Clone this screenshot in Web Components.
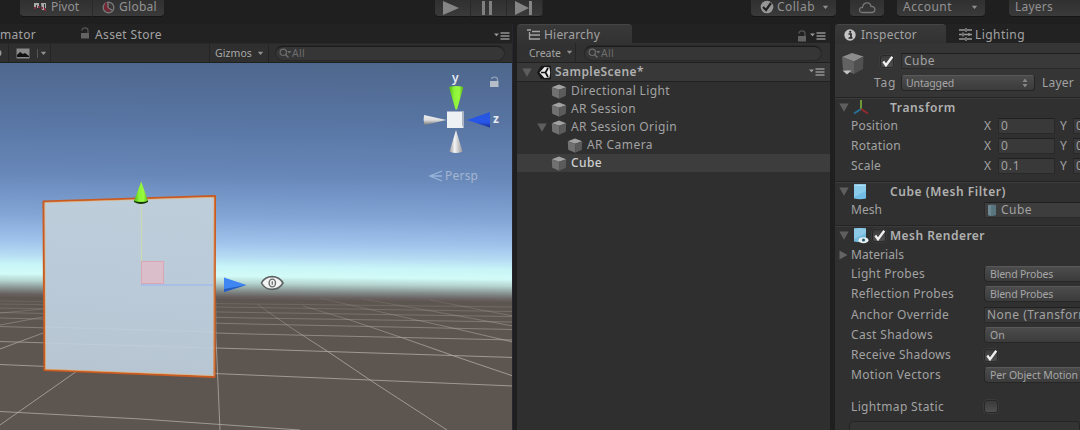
<!DOCTYPE html>
<html lang="en">
<head>
<meta charset="utf-8">
<title>Scene editor</title>
<style>
html,body{margin:0;height:100%;overflow:hidden;background:#1f1f1f}
body{font:12px/14px "Noto Sans","Open Sans",sans-serif;color:#a2a2a2}
</style>
</head>
<body>
<editor-app></editor-app>
<script>
function define(name, css, html, ready) {
  customElements.define(name, class extends HTMLElement {
    connectedCallback() {
      if (this.shadowRoot) return;
      const root = this.attachShadow({ mode: 'open' });
      root.innerHTML = '<style>*{box-sizing:border-box}' + css + '</style>' + (typeof html === 'function' ? html(this) : html);
      if (ready) ready(this);
    }
  });
}

// A label whose tracking is adjusted so that its text spans the width in "w".
define('ui-text', `:host{display:block;flex:none;white-space:nowrap;line-height:14px}
  :host([strong]){font-weight:600}:host([small]){font-size:10.5px}
  span{display:inline-block}`, '<span><slot></slot></span>', el => {
  const w = +el.getAttribute('w');
  if (!w) return;
  const natural = el.shadowRoot.querySelector('span').getBoundingClientRect().width;
  el.style.letterSpacing = ((w - natural) / el.textContent.length).toFixed(3) + 'px';
  el.style.width = w + 'px';
});

const ICONS = {
  pivot: [14, 10, '<path d="M1 1h5v5H4V3H3v3H1zM8 1h5v5h-1V2h-1v6H9z" fill="#aaa"/><path d="M1 5h2v2H1zM5 4h2v2H5zM8 5h2v2H8zM11 6h2v3h-2z" fill="#853044"/>'],
  globe: [13, 13, '<circle cx="6.5" cy="6.5" r="5.3" fill="#3a3434" stroke="#777" stroke-width="1.4"/><path d="M6 2v5l4 2M3 9l3-2" stroke="#999" fill="none"/><path d="M3 2l2-1v5l4 4-3 1-4-3z" fill="#7a2434"/>'],
  play: [18, 16, '<path d="M1 1l16 7-16 7z" fill="#858585"/>'],
  pause: [12, 16, '<path d="M1 1h3v14H1zM8 1h3v14H8z" fill="#808080"/>'],
  step: [18, 16, '<path d="M0 1l14 7-14 7zM14 1h3v14h-3z" fill="#858585"/>'],
  check: [14, 14, '<circle cx="7" cy="7" r="6.3" fill="#969696"/><path d="M3 7l3 3 5-7" fill="none" stroke="#222" stroke-width="2.2"/>'],
  cloud: [18, 13, '<path d="M4.5 11.5C0 11.5 1 6 4.500 6.500C5 1 12 0 13 5.500C18 5 18 11.500 14 11.500Z" fill="none" stroke="#777" stroke-width="1.3"/>'],
  lock: [10, 12, '<path d="M1 6h8v5.500H1z" fill="#636363"/><path d="M2 3.500C2 0 8 0 8 3.500V6" fill="none" stroke="#555" stroke-width="1.3"/>'],
  image: [15, 11, '<path d="M.5.5h13v10H.5z" fill="#898989"/><path d="M1 7l3-3 3 2 2-1 4 3v1H1z" fill="#111"/>'],
  down: [7, 5, '<path d="M.8.8h5.400L3.500 4z" fill="#909090"/>'],
  menu: [16, 8, '<path d="M0 1.500h5L2.500 4.200z" fill="#999"/><path d="M6.500 1h9M6.500 4h9M6.500 7h9" stroke="#929292" stroke-width="1.4"/>'],
  search: [13, 11, '<circle cx="4.300" cy="4.300" r="3.200" fill="none" stroke="#6c6c6c" stroke-width="1.200"/><path d="M6.500 6.500l3 3" stroke="#6c6c6c" stroke-width="1.500"/><path d="M8 3h4.500l-2.200 2.500z" fill="#6c6c6c"/>'],
  list: [14, 12, '<path d="M0 1h4M5 2.500h8M5 6h8M5 10h8M2.500 3v7H5M2.500 6H5" fill="none" stroke="#a4a4a4" stroke-width="1.300"/>'],
  info: [12, 12, '<circle cx="6" cy="6" r="5.700" fill="#c4c4c4"/><path d="M4.500 5H7v4M4.500 9h4" fill="none" stroke="#292929" stroke-width="1.700"/><circle cx="6.200" cy="2.800" r="1.100" fill="#292929"/>'],
  sliders: [13, 13, '<path d="M0 2h6M8 2h5M0 6.500h3M5 6.500h8M0 11h6M8 11h5M7 0v4M4 4.500v4M10 5v3M7 9v4" stroke="#999" stroke-width="1.300" fill="none"/>'],
  fold: [10, 9, '<path d="M.3.5h9.400L5 8.700z" fill="#5e5e5e"/>'],
  foldright: [9, 10, '<path d="M.5.500v9L8.500 5z" fill="#646464"/>'],
  unity: [15, 15, '<path d="M0 7.500L4 1 12 .5 14 1V14L12 14.500 4 14Z" fill="#161616"/><path d="M7.500 2L12.500 2.500l.7 5-.7 5-5 .5L2.500 7.500Z" fill="#e8e8e8"/><path d="M8.500 7.500H4M8.500 7.500L11 3M8.500 7.500L11 12" stroke="#111" stroke-width="1.700"/>'],
  cube: [16, 15, '<path d="M.8 3.200L8 .6l7.200 2.600-7 2.600z" fill="#a2a2a2"/><path d="M.8 3.200l7.400 2.600V14.800L1.200 11.800z" fill="#717171"/><path d="M15.200 3.200L8.200 5.800v9l6.600-3z" fill="#5b5b5b"/>'],
  bigcube: [24, 24, '<path d="M1 5L11 1l11.500 3.500L13 9.500z" fill="#8c8c8c"/><path d="M1 5l12 4.500V22L2 17.500z" fill="#626262"/><path d="M22.500 4.500L13 9.500V22l9-5z" fill="#505050"/><path d="M1.500 18.500h9L6 22.500z" fill="#c2c2c2"/>'],
  axes: [16, 15, '<path d="M8 9V0" stroke="#6f9838" stroke-width="2"/><path d="M8 9l-7 4.500" stroke="#27719a" stroke-width="2"/><path d="M8 9l7 4.500" stroke="#96292c" stroke-width="2"/>'],
  mesh: [14, 17, '<path d="M1 1.500Q7 .5 13 1.500V15.500Q7 17 1 15.500Z" fill="#72bde3"/><path d="M1 1.500Q7 .5 13 1.500V8L1 14Z" fill="#8acbea"/><path d="M1 2Q7 3 13 2" stroke="#b8e2f5" fill="none"/>'],
  meshgrey: [10, 13, '<path d="M1 1Q5 0 9 1v10Q5 13 1 11z" fill="#587580"/><path d="M1 1h3v11l-3-1z" fill="#6d8890"/>'],
  renderer: [16, 17, '<path d="M1 1.500Q7 .5 13 1.500V14.500Q7 16 1 14.500Z" fill="#72b9dd"/><path d="M1 1.500Q7 .5 13 1.500V6L1 12Z" fill="#8dcae8"/><ellipse cx="10.500" cy="13.200" rx="5" ry="3" fill="#e8f0f2"/><circle cx="10.500" cy="13" r="1.600" fill="#28596e"/>'],
  updown: [6, 10, '<path d="M.5 4L3 .5 5.500 4zM.5 6L3 9.500 5.500 6z" fill="#888"/>']
};
define('ui-icon', ':host{display:block;flex:none}svg{display:block}', el => {
  const [w, h, body] = ICONS[el.getAttribute('name')];
  return `<svg width="${w}" height="${h}" viewBox="0 0 ${w} ${h}">${body}</svg>`;
});

define('tool-button', `:host{display:flex;flex:none;align-items:center;height:17px;padding-bottom:2px;box-sizing:border-box;
  background:linear-gradient(#303030,#3a3a3a);border-bottom:1px solid #151515;border-radius:0 0 4px 4px}`, '<slot></slot>');

define('panel-tab', `:host{display:flex;flex:none;align-items:center;height:20px;padding-top:1px;box-sizing:border-box}
  :host([active]){background:linear-gradient(#393939,#323232);border-radius:4px 4px 0 0;border-top:1px solid #454545;padding-top:0}`, '<slot></slot>');

define('search-field', `:host{display:flex;align-items:center;height:14px;border-radius:8px;background:#363636;border-top:1px solid #1c1c1c;
  box-shadow:0 0 0 1px #282828;color:#6c6c6c;padding-left:3px}`,
  '<ui-icon name="search"></ui-icon><ui-text small w="13" style="padding-bottom:1px">All</ui-text>');

define('check-box', `:host{display:block;flex:none;width:14px;height:13px;background:linear-gradient(#3a3a3a,#505050);border-radius:3px;border:1px solid #292929;box-sizing:border-box;box-shadow:0 0 0 .5px #454545}
  svg{display:block;overflow:visible}`, el => `<svg width="12" height="11" viewBox="0 0 12 11">${el.hasAttribute('checked') ? '<path d="M2.300 5.500L5 9.300 11.300.8" fill="none" stroke="#f2f2f2" stroke-width="2.300"/>' : ''}</svg>`);

define('drop-down', `:host{display:flex;flex:none;align-items:center;height:16px;border-radius:4px;box-sizing:border-box;
  background:linear-gradient(#4c4c4c,#3b3b3b);border:1px solid #262626;border-top-color:#595959;padding-left:5px;color:#a6a6a6}`, '<slot></slot>');

define('value-field', `:host{display:flex;flex:none;align-items:center;height:16px;box-sizing:border-box;background:#393939;border:1px solid #292929;border-top-color:#202020;padding-left:2px;overflow:hidden}`, '<slot></slot>');

define('prop-row', `:host{display:flex;align-items:center;height:20.25px;padding-left:16px}
  .name{width:133px;flex:none}`, el => `<div class="name"><ui-text w="${el.getAttribute('w')}">${el.getAttribute('label')}</ui-text></div><slot></slot>`);

define('vector-row', ':host{display:block}value-field{width:57px;margin:0 5px 0 2px}', el => `
  <prop-row label="${el.getAttribute('label')}" w="${el.getAttribute('w')}" style="height:20px">
    <ui-text style="width:12px">X</ui-text><value-field><ui-text style="letter-spacing:.8px">${el.getAttribute('x')}</ui-text></value-field>
    <ui-text style="width:12px">Y</ui-text><value-field style="margin-left:1px"><ui-text>0</ui-text></value-field>
  </prop-row>`);

define('tree-row', `:host{display:flex;align-items:center;height:18px}
  :host([selected]){background:#3d3d3d;color:#d0d0d0;font-weight:500}
  .fold{width:14px;flex:none}ui-text{margin-left:4px}`, el => `
  <div class="fold" style="margin-left:${el.getAttribute('indent')}px">${el.hasAttribute('open') ? '<ui-icon name="fold"></ui-icon>' : ''}</div>
  <ui-icon name="cube"></ui-icon><ui-text w="${el.getAttribute('w')}">${el.getAttribute('label')}</ui-text>`);

define('component-head', `:host{display:flex;align-items:center;height:20px;box-sizing:border-box;border-top:1px solid #242424;box-shadow:inset 0 1px #3b3b3b;padding-left:4px;color:#b0b0b0}
  .icons{display:flex;align-items:center;width:42px;margin-left:-1px;flex:none}.icons ui-icon{margin-left:5px}check-box{margin-left:3px}`, el => `
  <ui-icon name="fold"></ui-icon><div class="icons"><ui-icon name="${el.getAttribute('icon')}"></ui-icon>${el.hasAttribute('toggle') ? '<check-box checked></check-box>' : ''}</div>
  <ui-text strong w="${el.getAttribute('w')}">${el.getAttribute('label')}</ui-text>`);

define('app-toolbar', `:host{display:flex;height:24px;background:#1f1f1f;align-items:flex-start;color:#929292}
  .left{border-right:1px solid #2a2a2a;border-bottom-right-radius:0}.mid{width:36px;padding:0 0 1px 8px;border-radius:0;border-right:1px solid #292929}`, `
  <tool-button class="left" style="width:73px;margin-left:20px;padding-left:13px"><ui-icon name="pivot"></ui-icon><ui-text w="28" style="margin-left:4px">Pivot</ui-text></tool-button>
  <tool-button style="width:71px;padding-left:9px;border-bottom-left-radius:0"><ui-icon name="globe"></ui-icon><ui-text w="38" style="margin-left:4px">Global</ui-text></tool-button>
  <tool-button class="mid" style="margin-left:271px;padding-left:7px;border-bottom-left-radius:4px"><ui-icon name="play"></ui-icon></tool-button>
  <tool-button class="mid" style="padding-left:10px"><ui-icon name="pause"></ui-icon></tool-button>
  <tool-button class="mid" style="border-bottom-right-radius:4px"><ui-icon name="step"></ui-icon></tool-button>
  <tool-button style="width:85px;margin-left:208px;padding-left:9px"><ui-icon name="check"></ui-icon><ui-text w="38" style="margin-left:3px">Collab</ui-text><ui-icon name="down" style="margin-left:7px"></ui-icon></tool-button>
  <tool-button style="width:34px;margin-left:14px;padding-left:8px"><ui-icon name="cloud"></ui-icon></tool-button>
  <tool-button style="width:88px;margin-left:13px;padding-left:6px"><ui-text w="49">Account</ui-text><ui-icon name="down" style="margin-left:19px"></ui-icon></tool-button>
  <tool-button style="width:90px;margin-left:24px;padding-left:6px"><ui-text w="38">Layers</ui-text></tool-button>`);

define('scene-view', ':host{display:block;flex:1;overflow:hidden}svg{display:block}', `
<svg width="512" height="367" viewBox="0 63 512 367">
  <defs>
    <linearGradient id="sky" gradientUnits="userSpaceOnUse" x1="256" y1="63" x2="253.300" y2="300">
      <stop offset="0" stop-color="#4e678d"/><stop offset=".25" stop-color="#5875a3"/><stop offset=".48" stop-color="#6888ba"/><stop offset=".65" stop-color="#82a5d6"/><stop offset=".76" stop-color="#a0c3ec"/><stop offset=".82" stop-color="#b6dcf3"/><stop offset=".86" stop-color="#c8f5f8"/><stop offset=".9" stop-color="#d2fbf7"/><stop offset=".93" stop-color="#b4d3cf"/><stop offset=".962" stop-color="#858f8d"/><stop offset=".987" stop-color="#67605f"/><stop offset="1" stop-color="#5f5753"/>
    </linearGradient>
    <linearGradient id="face" x1=".5" y1="0" x2=".4" y2="1"><stop offset="0" stop-color="#becdda"/><stop offset=".5" stop-color="#bbcad8"/><stop offset="1" stop-color="#b6c5d1"/></linearGradient>
    <linearGradient id="fade" x1="0" y1="296" x2="0" y2="350" gradientUnits="userSpaceOnUse"><stop offset="0" stop-color="#aaa39f" stop-opacity=".1"/><stop offset="1" stop-color="#aaa49f" stop-opacity=".85"/></linearGradient>
    <linearGradient id="cone"><stop offset="0" stop-color="#999"/><stop offset=".4" stop-color="#f4f4f4"/><stop offset="1" stop-color="#999"/></linearGradient>
    <linearGradient id="coneh" x2="0" y2="1"><stop offset="0" stop-color="#eee"/><stop offset=".5" stop-color="#ddd"/><stop offset="1" stop-color="#777"/></linearGradient>
    <linearGradient id="green"><stop offset="0" stop-color="#4db511"/><stop offset=".35" stop-color="#8cf23a"/><stop offset=".7" stop-color="#98fa3e"/><stop offset="1" stop-color="#55a819"/></linearGradient>
    <linearGradient id="blue" x2="0" y2="1"><stop offset="0" stop-color="#2458d8"/><stop offset=".65" stop-color="#2856ea"/><stop offset="1" stop-color="#142f8d"/></linearGradient>
  </defs>
  <rect y="63" width="512" height="242" fill="url(#sky)"/>
  <path d="M0 297L512 302V430H0Z" fill="#5c5550"/>
  <g fill="none" stroke="url(#fade)" stroke-width="1">
    <path d="M0 411.500L141 419 300 430M0 364.500L250 375 513 386M0 341.500L250 349 513 357.500M0 326.500L250 334 513 340M0 318L250 324 513 329.500M0 312.500L250 318 513 322M0 308L250 312.500 513 316.500M0 304L250 307.500 513 311.500M0 301L513 307"/>
    <path d="M257 304L290 327 330 353 373 382 447 430M303 306L350 320 403 338 457 357 513 376M320 298L350 305 403 317 457 329 513 342M363 299L437 312 513 326M430 300L513 316M216 300L216 337 220 430M0 425L77 371M0 349L43 333M0 325L43 317M0 313L43 309"/>
  </g>
  <path d="M43.500 201.500L215 196 214.500 377 44.500 370Z" fill="url(#face)" stroke="#c85a22" stroke-width="2.100" stroke-linejoin="round"/>
  <path d="M45 202.500L214 197.300V375.500L45.500 369.200Z" fill="none" stroke="#e8b777" stroke-width=".6"/>
  <path d="M45 343L214 348M45 327L214 332" stroke="#ccd8de" stroke-opacity=".35"/>
  <path d="M141.500 204V284" stroke="#c8dab8" stroke-width="1.300"/><path d="M141 285H213" stroke="#a5bbe8" stroke-width="1.300"/>
  <rect x="141.500" y="261.500" width="22" height="22" fill="#dabfcb" stroke="#dca5b4"/>
  <path d="M134 202Q141 206 148 202V200H134Z" fill="#153606"/><path d="M141.200 181.500L148 201Q141 203 134 201Z" fill="url(#green)"/>
  <path d="M224 277.500L246.500 285 224 292Z" fill="#3f86f2"/><path d="M224 289L246.500 285 224 292Z" fill="#285cbc"/>
  <path d="M261.500 283C266 274.500 278 274.500 283 283C278 291.500 266 291.500 261.500 283Z" fill="#f2f3f2" stroke="#5d6363" stroke-width="1.600"/><ellipse cx="272.300" cy="283" rx="3.200" ry="3.900" fill="#eee" stroke="#666b6b" stroke-width="1.400"/><path d="M272.300 281.300v3.400" stroke="#777" stroke-width="1.400"/>
  <path d="M449 87Q456 85 463.500 87L457 109.500H455.500Z" fill="url(#green)"/><path d="M424 115Q423 120 424.500 125L446.500 120Z" fill="url(#coneh)"/>
  <path d="M467 120L490 112V127.500Z" fill="url(#blue)"/><path d="M456 130L462.500 151.500Q456 154.500 449.500 151.500Z" fill="url(#cone)"/>
  <path d="M447 111.500H463.500V128H447Z" fill="#eef1f4"/><path d="M462 111.500H464V127.500L462 126Z" fill="#a9b5c4"/>
  <path d="M490 81h8.500v6H490z" fill="#b5bdc8"/><path d="M491.500 79C491.500 76.500 497.500 76.500 497.500 79.500V81" fill="none" stroke="#8fa0b8" stroke-width="1.200"/>
  <path d="M442 171L430 176 442 181M430 176H442" stroke="#98b4d8" fill="none" stroke-width="1.300"/>
  <g font-family="Noto Sans,sans-serif"><text x="452" y="82" font-size="12" font-weight="600" fill="#e6ebf2" textLength="7">y</text><text x="493" y="123" font-size="12" font-weight="700" fill="#e6ebf2">z</text><text x="445" y="180" font-size="12" fill="#a3b5cf" textLength="33">Persp</text></g>
</svg>`);

define('scene-panel', `:host{display:flex;flex-direction:column;width:513px;flex:none;border-right:1px solid #24282e;box-sizing:border-box}
  .tabs{display:flex;height:19px;align-items:center;background:#222}.bar{display:flex;height:20px;align-items:center;background:#2f2f2f;border-top:1px solid #282828;border-bottom:1px solid #202020;color:#a8a8a8}
  .sep{height:18px;border-left:1px solid #242424}`, `
  <div class="tabs"><ui-text w="36" style="margin-top:2px">mator</ui-text><ui-icon name="lock" style="margin:-2px 0 0 44px"></ui-icon><ui-text w="67" style="margin:2px 0 0 5px">Asset Store</ui-text><ui-icon name="menu" style="margin:5px 0 0 332px"></ui-icon></div>
  <div class="bar"><svg width="2" height="8"><circle cx="-2" cy="4" r="3.500" fill="#999"/></svg><i class="sep" style="margin-left:6px"></i><ui-icon name="image" style="margin-left:7px"></ui-icon><i class="sep" style="height:9px;border-color:#555;margin-left:6px"></i><ui-icon name="down" style="margin-left:2px"></ui-icon><i class="sep" style="margin-left:3px"></i><i class="sep" style="margin-left:158px"></i><ui-text small w="37" style="margin-left:5px">Gizmos</ui-text><ui-icon name="down" style="margin-left:5px"></ui-icon><i class="sep" style="margin-left:4px"></i><search-field style="width:228px;margin-left:7px"></search-field></div>
  <scene-view></scene-view>`);

define('hierarchy-panel', `:host{display:block;width:313px;flex:none;margin-left:4px;background:#2f2f2f}
  .tabs{display:flex;height:19px;background:#222}.bar{display:flex;height:20px;align-items:center;background:#313131;border-bottom:1px solid #202020;color:#a4a4a4}
  .scene{display:flex;height:19px;align-items:center;background:#383838;border-bottom:1px solid #202020;padding-left:5px;color:#b0b0b0}`, `
  <div class="tabs"><panel-tab active style="width:115px;padding-left:10px"><ui-icon name="list"></ui-icon><ui-text w="56" style="margin-left:3px">Hierarchy</ui-text></panel-tab><ui-icon name="lock" style="margin:6px 0 0 165px"></ui-icon><ui-icon name="menu" style="margin:8px 0 0 3px"></ui-icon></div>
  <div class="bar"><ui-text small w="32" style="margin-left:12px">Create</ui-text><ui-icon name="down" style="margin-left:5px"></ui-icon><i style="height:19px;border-left:1px solid #262626;margin:0 9px 0 2px"></i><search-field style="width:236px"></search-field></div>
  <div class="scene"><ui-icon name="fold"></ui-icon><ui-icon name="unity" style="margin-left:5px"></ui-icon><ui-text strong w="89" style="margin-left:3px">SampleScene*</ui-text><ui-icon name="menu" style="margin-left:165px"></ui-icon></div>
  <tree-row indent="20" label="Directional Light" w="99"></tree-row>
  <tree-row indent="20" label="AR Session" w="65"></tree-row>
  <tree-row indent="20" label="AR Session Origin" w="106" open></tree-row>
  <tree-row indent="36" label="AR Camera" w="66"></tree-row>
  <tree-row indent="20" label="Cube" w="31" selected></tree-row>`);

define('inspector-panel', `:host{display:block;flex:1;min-width:0;overflow:hidden;margin-left:5px;background:#303030}
  .tabs{display:flex;height:19px;background:#222}.head{display:flex;height:54px;background:#353535;padding:10px 0 0 6px}
  .rows{flex:1;margin-left:11px}.line{display:flex;align-items:center;height:16px}.line+.line{margin-top:6px}drop-down.wide{width:120px}
  .box{height:20px;margin:4px 0 0 14px;border:1px solid #242424;border-radius:4px;background:#343434}`, `
  <div class="tabs"><panel-tab active style="width:111px;padding-left:9px"><ui-icon name="info"></ui-icon><ui-text w="56" style="margin-left:5px">Inspector</ui-text></panel-tab><panel-tab style="padding-left:13px"><ui-icon name="sliders"></ui-icon><ui-text w="50" style="margin-left:3px">Lighting</ui-text></panel-tab></div>
  <div class="head"><ui-icon name="bigcube" style="margin-top:-1px"></ui-icon><div class="rows">
    <div class="line"><check-box checked style="margin:0 0 0 4px"></check-box><value-field style="width:190px;margin-left:7px"><ui-text w="31">Cube</ui-text></value-field></div>
    <div class="line" style="margin-left:-2px"><ui-text w="22">Tag</ui-text><drop-down style="width:134px;margin-left:5px;padding-left:4px"><ui-text small w="48">Untagged</ui-text><ui-icon name="updown" style="margin-left:68px"></ui-icon></drop-down><ui-text w="32" style="margin-left:7px">Layer</ui-text></div>
  </div></div>
  <component-head icon="axes" label="Transform" w="66"></component-head>
  <vector-row label="Position" w="47" x="0" style="margin-top:-1px"></vector-row><vector-row label="Rotation" w="50" x="0"></vector-row><vector-row label="Scale" w="30" x="0.1"></vector-row>
  <component-head icon="mesh" label="Cube (Mesh Filter)" w="116" style="margin-top:5px"></component-head>
  <prop-row label="Mesh" w="31" style="height:18px"><value-field style="width:120px;background:#3d3d3d"><ui-icon name="meshgrey"></ui-icon><ui-text w="31" style="margin-left:4px">Cube</ui-text></value-field></prop-row>
  <component-head icon="renderer" label="Mesh Renderer" w="95" toggle style="margin-top:6px"></component-head>
  <div style="display:flex;height:19px;align-items:center;padding-left:4px"><ui-icon name="foldright"></ui-icon><ui-text w="53" style="margin-left:3px">Materials</ui-text></div>
  <prop-row label="Light Probes" w="74"><drop-down class="wide"><ui-text small w="63">Blend Probes</ui-text></drop-down></prop-row>
  <prop-row label="Reflection Probes" w="103"><drop-down class="wide"><ui-text small w="63">Blend Probes</ui-text></drop-down></prop-row>
  <prop-row label="Anchor Override" w="98"><value-field style="width:120px"><ui-text w="107">None (Transform)</ui-text></value-field></prop-row>
  <prop-row label="Cast Shadows" w="82"><drop-down class="wide"><ui-text small w="15">On</ui-text></drop-down></prop-row>
  <prop-row label="Receive Shadows" w="100"><check-box checked></check-box></prop-row>
  <prop-row label="Motion Vectors" w="90"><drop-down class="wide"><ui-text small w="88">Per Object Motion</ui-text></drop-down></prop-row>
  <prop-row label="Lightmap Static" w="93" style="margin-top:11px"><check-box></check-box></prop-row>
  <div class="box"></div>`);

define('editor-app', ':host{display:flex;flex-direction:column;width:1080px;height:430px;overflow:hidden}main{display:flex;flex:1;min-height:0}', `
  <app-toolbar></app-toolbar><main><scene-panel></scene-panel><hierarchy-panel></hierarchy-panel><inspector-panel></inspector-panel></main>`);
</script>
</body>
</html>
